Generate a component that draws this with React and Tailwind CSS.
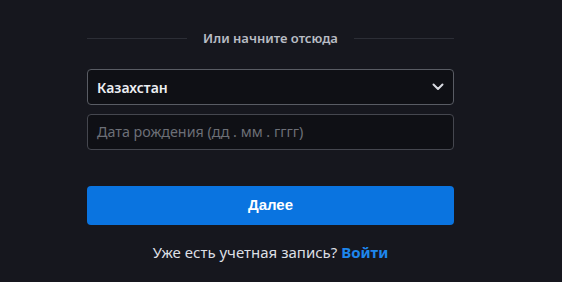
import React from "react";

export default function App() {
  return (
    <div className="w-[562px] h-[282px] bg-[#16171e] overflow-hidden" style={{ fontFamily: '"Noto Sans", "Open Sans", sans-serif' }}>
      <div className="ml-[87px] w-[367px] pt-[29px] flex flex-col">
        <div className="flex items-center h-[19px]">
          <div className="flex-1 h-px bg-[#2c2e36]" />
          <span className="px-[16px] text-[13px] font-semibold text-[#b8bcc4] leading-[19px]">Или начните отсюда</span>
          <div className="flex-1 h-px bg-[#2c2e36]" />
        </div>
        <div className="mt-[21px] h-[36px] rounded-[4px] border border-[#595c64] bg-[#0f1015] flex items-center justify-between pl-[9px] pr-[8px]">
          <span className="text-[14px] font-semibold text-[#eceef2]">Казахстан</span>
          <svg width="14" height="14" viewBox="0 0 14 14" fill="none">
            <path d="M2.5 4.5 L7 9 L11.5 4.5" stroke="#d8dae0" strokeWidth="2" strokeLinecap="round" strokeLinejoin="round" />
          </svg>
        </div>
        <div className="mt-[9px] h-[36px] rounded-[4px] border border-[#45474f] bg-[#0f1015] flex items-center pl-[9px]">
          <span className="text-[14.3px] text-[#6c6f77]">Дата рождения (дд . мм . гггг)</span>
        </div>
        <button className="mt-[36px] h-[39px] rounded-[4px] bg-[#0a74e0] text-white text-[15px] font-bold" style={{ fontFamily: '"Liberation Sans", Arial, sans-serif' }}>
          Далее
        </button>
        <div className="mt-[17px] text-center text-[15px] text-[#dcdfe4] leading-[20px]">
          Уже есть учетная запись? <span className="font-bold text-[#1e86ec]">Войти</span>
        </div>
      </div>
    </div>
  );
}
